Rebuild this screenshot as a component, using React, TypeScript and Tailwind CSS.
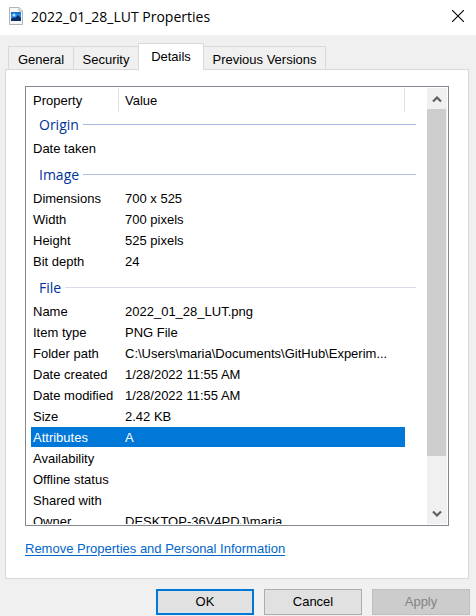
type Property = { name: string; value?: string; selected?: boolean };
type Group = { title: string; line: string; rows: Property[] };

const groups: Group[] = [
  { title: "Origin", line: "bg-[#a6b9e2]", rows: [{ name: "Date taken" }] },
  {
    title: "Image",
    line: "bg-[#b0c1e6]",
    rows: [
      { name: "Dimensions", value: "700 x 525" },
      { name: "Width", value: "700 pixels" },
      { name: "Height", value: "525 pixels" },
      { name: "Bit depth", value: "24" },
    ],
  },
  {
    title: "File",
    line: "bg-[#d9dcec]",
    rows: [
      { name: "Name", value: "2022_01_28_LUT.png" },
      { name: "Item type", value: "PNG File" },
      { name: "Folder path", value: "C:\\Users\\maria\\Documents\\GitHub\\Experim..." },
      { name: "Date created", value: "1/28/2022 11:55 AM" },
      { name: "Date modified", value: "1/28/2022 11:55 AM" },
      { name: "Size", value: "2.42 KB" },
      { name: "Attributes", value: "A", selected: true },
      { name: "Availability" },
      { name: "Offline status" },
      { name: "Shared with" },
      { name: "Owner", value: "DESKTOP-36V4PDJ\\maria" },
    ],
  },
];

function FileIcon() {
  return (
    <svg width="14" height="18" viewBox="0 0 14 18" aria-hidden="true">
      <path d="M.5.5h9.5l3.5 3.5v13.5H.5z" fill="#f7f7f7" stroke="#b4b4b4" />
      <path d="M10 .5V4h3.5" fill="#e4e4e4" stroke="#b4b4b4" />
      <rect x="2" y="5" width="10" height="9" fill="#2b8be0" />
      <rect x="2" y="5" width="10" height="2" fill="#1673cf" />
      <circle cx="5" cy="8" r="1.5" fill="#a4e0ff" />
      <path d="M2 12l3-2 1 1 3-3 3 3v3H2z" fill="#0b2f66" />
    </svg>
  );
}

function TitleBar() {
  return (
    <header className="flex h-[35px] items-center bg-white pb-[3px] pl-[9px] pr-3">
      <FileIcon />
      <h1 className="ml-2 flex-1 pt-0.5 font-['Open_Sans',sans-serif] text-[14px] leading-5">
        2022_01_28_LUT Properties
      </h1>
      <button type="button" aria-label="Close">
        <svg width="12" height="12" viewBox="0 0 12 12">
          <path d="M0 0l12 12M12 0L0 12" stroke="#000" strokeWidth="1.1" />
        </svg>
      </button>
    </header>
  );
}

const idleTab = "h-[23px] border border-b-0 border-[#d9d9d9] bg-[#f0f0f0] pt-1";

function Tabs() {
  return (
    <div role="tablist" className="flex items-end pl-[3px] leading-[18px]">
      <button type="button" role="tab" className={`${idleTab} w-[66px]`}>General</button>
      <button type="button" role="tab" className={`${idleTab} -ml-px w-[65px] border-r-0`}>Security</button>
      <button
        type="button"
        role="tab"
        aria-selected="true"
        className="z-10 -mb-px h-[27px] w-[66px] border border-b-0 border-[#d9d9d9] bg-white"
      >
        Details
      </button>
      <button type="button" role="tab" className={`${idleTab} w-[122px] border-l-0`}>Previous Versions</button>
    </div>
  );
}

function PropertyTable() {
  return (
    <table className="w-full table-fixed border-separate border-spacing-0 text-left leading-[22px]">
      <colgroup>
        <col className="w-[87px]" />
        <col />
        <col className="w-[11px]" />
      </colgroup>
      <thead>
        <tr>
          <th className="h-[25px] p-0 pl-0.5 pt-px font-normal">Property</th>
          <th className="p-0 pb-px font-normal">
            <div className="flex h-6 items-center border-x border-[#e0e0e0] pl-1.5 pt-0.5">Value</div>
          </th>
          <td />
        </tr>
      </thead>
      {groups.map((group, index) => (
        <tbody key={group.title}>
          <tr>
            <th colSpan={3} className={index === 0 ? "p-0 pb-0.5 font-normal" : "p-0 pb-0.5 pt-1 font-normal"}>
              <div className="flex h-[23px] items-center gap-1 pl-2">
                <span className="font-['Open_Sans',sans-serif] text-[14px] text-[#003399]">{group.title}</span>
                <span className={`h-px flex-1 ${group.line}`} />
              </div>
            </th>
          </tr>
          {group.rows.map((row) => {
            const tone = row.selected ? "bg-[#0078d7] text-white" : "";
            return (
              <tr key={row.name}>
                <th className="h-[21px] p-0 pb-px font-normal">
                  <div className={`h-5 whitespace-nowrap pl-0.5 ${tone}`}>{row.name}</div>
                </th>
                <td className="p-0 pb-px">
                  <div className={`h-5 truncate pl-[7px] ${tone}`}>{row.value}</div>
                </td>
                <td className="p-0" />
              </tr>
            );
          })}
        </tbody>
      ))}
    </table>
  );
}

function ScrollBar() {
  return (
    <div className="flex w-5 flex-col bg-[#f0f0f0]">
      <button type="button" aria-label="Scroll up" className="flex h-[21px] items-center justify-center">
        <svg width="10" height="8" viewBox="0 0 10 8">
          <path d="M1 6.5l4-4 4 4" fill="none" stroke="#606060" strokeWidth="2.2" />
        </svg>
      </button>
      <div className="mr-px grow-[347] bg-[#cdcdcd]" />
      <div className="grow-[47]" />
      <button type="button" aria-label="Scroll down" className="flex h-[21px] items-center justify-center">
        <svg width="10" height="8" viewBox="0 0 10 8">
          <path d="M1 1.5l4 4 4-4" fill="none" stroke="#606060" strokeWidth="2.2" />
        </svg>
      </button>
    </div>
  );
}

export default function App() {
  return (
    <div className="flex min-h-screen flex-col bg-[#f0f0f0] font-['Liberation_Sans',Arial,sans-serif] text-[13px] leading-[22px] text-black">
      <TitleBar />
      <main className="pl-[5px] pr-[7px] pt-2">
        <Tabs />
        <section className="border border-[#d9d9d9] bg-white px-[19px] pb-[18px] pt-4">
          <div className="flex h-[440px] border border-[#828790] py-px pl-[5px] pr-px">
            <div className="mr-[11px] min-w-0 flex-1 overflow-hidden">
              <PropertyTable />
            </div>
            <ScrollBar />
          </div>
          <a href="#remove" className="mt-3 inline-block text-[#0066cc] underline underline-offset-2">
            Remove Properties and Personal Information
          </a>
        </section>
      </main>
      <footer className="flex justify-end gap-2.5 pb-px pr-1.5 pt-2.5">
        <button type="button" className="h-[26px] w-[98px] border-2 border-[#0078d7] bg-[#e1e1e1]">OK</button>
        <button type="button" className="h-[26px] w-[98px] border border-[#adadad] bg-[#e1e1e1]">Cancel</button>
        <button type="button" disabled className="h-[26px] w-[98px] border border-[#bfbfbf] bg-[#cccccc] text-[#838383]">
          Apply
        </button>
      </footer>
    </div>
  );
}
